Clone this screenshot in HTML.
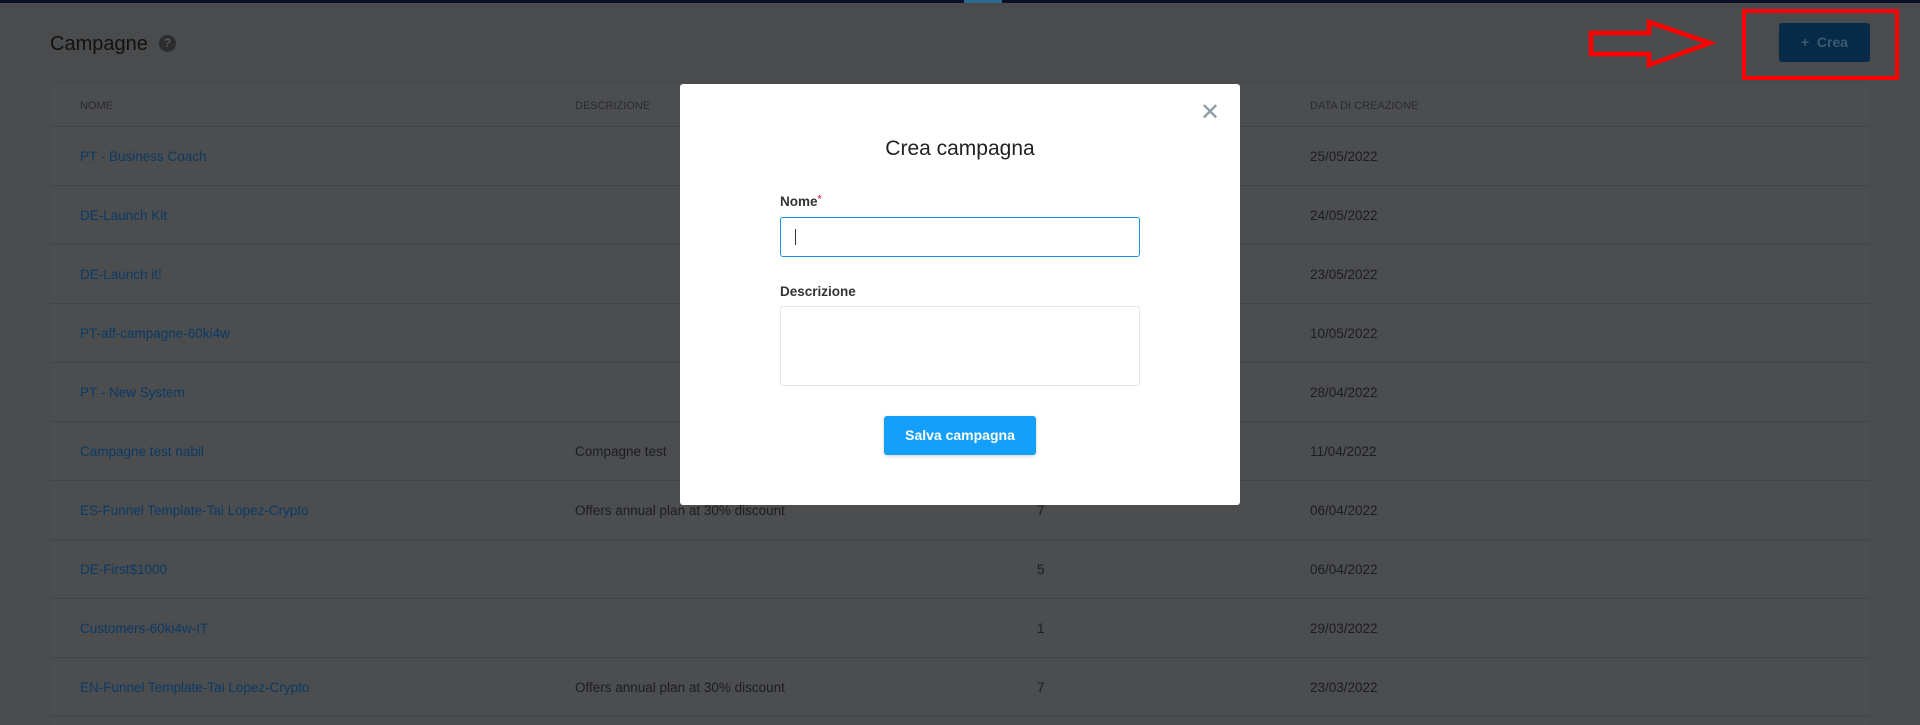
<!DOCTYPE html>
<html><head><meta charset="utf-8"><style>
*{margin:0;padding:0;box-sizing:border-box}
body{width:1920px;height:718px;overflow:hidden;background:#4a4b4d;font-family:"Liberation Sans",sans-serif;position:relative}
.top{position:absolute;left:0;top:0;width:1920px;height:3px;background:#0b1127}
.top i{position:absolute;left:964px;width:38px;height:3px;background:#2a6a90}
h1{position:absolute;left:50px;top:33px;font-size:20px;font-weight:normal;color:#111}
.help{position:absolute;left:159px;top:35px;width:17px;height:17px;border-radius:50%;background:#2c2d2f;color:#555;font-size:12px;font-weight:bold;text-align:center;line-height:17px}
.card{position:absolute;left:50px;top:85px;width:1820px;height:640px;background:#4c4d4f}
.row{position:absolute;left:0;width:1820px;height:59px;border-bottom:1px solid #444547;font-size:13.5px;color:#1c1d1f}
.row span{position:absolute;top:0;line-height:59px;white-space:nowrap}
.row .n{left:30px;color:#0b3a66}
.row .d{left:525px}.row .c{left:987px}.row .t{left:1260px}
.hd{height:42px;font-size:11px;color:#2a2b2d}
.hd span{line-height:42px}
.modal{position:absolute;left:680px;top:84px;width:560px;height:421px;background:#fff;border-radius:3px}
.x{position:absolute;left:520px;top:17px;font-size:24px;color:#8f9ba4;line-height:24px}
.mt{position:absolute;left:0;width:560px;top:53px;text-align:center;font-size:21px;color:#222}
.lb{position:absolute;left:100px;font-size:13.5px;color:#333;font-weight:bold}
.lb b{color:#e5486b;font-size:10px;vertical-align:top}
.in{position:absolute;left:100px;width:360px;border:1px solid #e6e6e6;border-radius:3px}
.btn{position:absolute;left:204px;top:332px;width:152px;height:39px;background:#149ffa;border-radius:3px;color:#fff;font-weight:bold;font-size:14px;text-align:center;line-height:39px;box-shadow:0 1px 3px rgba(0,0,0,.2)}
.crea{position:absolute;left:1779px;top:23px;width:91px;height:39px;background:#062a47;border-radius:3px;color:#3d5a70;font-size:14px;font-weight:bold;text-align:center;line-height:39px}
.box{position:absolute;left:1742px;top:9px;width:157px;height:71px;border:4px solid #f00}
</style></head><body>
<div class="top"><i></i></div>
<h1>Campagne</h1><div class="help">?</div>
<div class="card">
<div class="row hd" style="top:0"><span class="n" style="color:#2a2b2d">NOME</span><span class="d">DESCRIZIONE</span><span class="t">DATA DI CREAZIONE</span></div>
<div class="row" style="top:42px"><span class="n">PT - Business Coach</span><span class="t">25/05/2022</span></div>
<div class="row" style="top:101px"><span class="n">DE-Launch Kit</span><span class="t">24/05/2022</span></div>
<div class="row" style="top:160px"><span class="n">DE-Launch it!</span><span class="t">23/05/2022</span></div>
<div class="row" style="top:219px"><span class="n">PT-aff-campagne-60ki4w</span><span class="t">10/05/2022</span></div>
<div class="row" style="top:278px"><span class="n">PT - New System</span><span class="t">28/04/2022</span></div>
<div class="row" style="top:337px"><span class="n">Campagne test nabil</span><span class="d">Compagne test</span><span class="t">11/04/2022</span></div>
<div class="row" style="top:396px"><span class="n">ES-Funnel Template-Tai Lopez-Crypto</span><span class="d">Offers annual plan at 30% discount</span><span class="c">7</span><span class="t">06/04/2022</span></div>
<div class="row" style="top:455px"><span class="n">DE-First$1000</span><span class="c">5</span><span class="t">06/04/2022</span></div>
<div class="row" style="top:514px"><span class="n">Customers-60ki4w-IT</span><span class="c">1</span><span class="t">29/03/2022</span></div>
<div class="row" style="top:573px"><span class="n">EN-Funnel Template-Tai Lopez-Crypto</span><span class="d">Offers annual plan at 30% discount</span><span class="c">7</span><span class="t">23/03/2022</span></div>
</div>
<div class="crea">+&nbsp;&nbsp;Crea</div>
<div class="box"></div>
<svg style="position:absolute;left:1586px;top:18px" width="132" height="52"><polygon points="5,15 63,15 63,4 124,25 63,47 63,36 5,36" fill="none" stroke="#f00" stroke-width="4.5"/></svg>
<div class="modal">
<div class="x">✕</div>
<div class="mt">Crea campagna</div>
<div class="lb" style="top:110px">Nome<b>*</b></div>
<div class="in" style="top:133px;height:40px;border-color:#1a8fe0"><div style="position:absolute;left:14px;top:11px;width:1px;height:16px;background:#333"></div></div>
<div class="lb" style="top:200px">Descrizione</div>
<div class="in" style="top:222px;height:80px"></div>
<div class="btn">Salva campagna</div>
</div>
</body></html>
